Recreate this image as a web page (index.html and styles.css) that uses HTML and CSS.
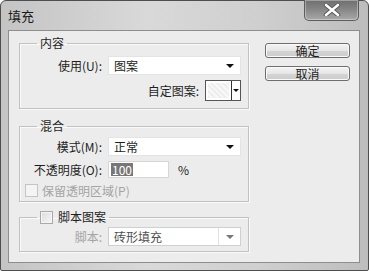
FILE: index.html
```html
<!DOCTYPE html>
<html lang="zh-CN">
<head>
    <title>填充</title>
    <meta charset="UTF-8" />
    <link rel="stylesheet" href="styles.css">
</head>
<body>
    <div class="window">
        <div class="titlebar">
            <span class="title">填充</span>
            <div class="close">
                <svg width="20" height="12" viewBox="0 0 20 12">
                    <path d="M4 1 L16 11 M16 1 L4 11" stroke="#5a5a5a" stroke-width="4.5" stroke-linecap="round"/>
                    <path d="M4 1 L16 11 M16 1 L4 11" stroke="#ffffff" stroke-width="2.5" stroke-linecap="round"/>
                </svg>
            </div>
        </div>

        <div class="client">
            <div class="groups">
                <fieldset class="group group-content">
                    <legend>内容</legend>
                    <div class="form-row">
                        <label class="label">使用(U):</label>
                        <div class="select"><span class="value">图案</span><span class="arrow"></span></div>
                    </div>
                    <div class="pattern-row">
                        <span>自定图案:</span>
                        <div class="swatch">
                            <div class="swatch-preview"></div>
                            <div class="swatch-drop"><span class="arrow small"></span></div>
                        </div>
                    </div>
                </fieldset>

                <fieldset class="group group-blend">
                    <legend>混合</legend>
                    <div class="form-row">
                        <label class="label">模式(M):</label>
                        <div class="select"><span class="value">正常</span><span class="arrow"></span></div>
                    </div>
                    <div class="form-row">
                        <label class="label">不透明度(O):</label>
                        <div class="opacity">
                            <div class="textbox"><span class="selected">100</span></div>
                            <span class="unit">%</span>
                        </div>
                    </div>
                    <div class="check-row disabled">
                        <span class="checkbox"></span>
                        <span>保留透明区域(P)</span>
                    </div>
                </fieldset>

                <fieldset class="group group-script">
                    <legend><span class="checkbox"></span><span>脚本图案</span></legend>
                    <div class="form-row">
                        <label class="label disabled">脚本:</label>
                        <div class="select select-disabled">
                            <span class="value">砖形填充</span>
                            <span class="drop"><span class="arrow grey"></span></span>
                        </div>
                    </div>
                </fieldset>
            </div>

            <div class="buttons">
                <button class="btn">确定</button>
                <button class="btn">取消</button>
            </div>
        </div>
    </div>
</body>
</html>
```

FILE: styles.css
```css
* {
    box-sizing: border-box;
}

body {
    margin: 0;
    background: #ffffff;
    font-family: "Noto Sans CJK SC", "Liberation Sans", sans-serif;
    font-size: 12px;
    color: #1e1e1e;
}

.window {
    width: 369px;
    height: 271px;
    border: 1px solid #4e4e4e;
    border-radius: 6px 6px 2px 2px;
    background: linear-gradient(to right, #c4c4c4, #d9d9d9 40%, #cfcfcf 70%, #bdbdbd);
    padding: 0 8px 7px 7px;
    display: flex;
    flex-direction: column;
}

.titlebar {
    height: 29px;
    display: flex;
    align-items: flex-start;
}

.title {
    font-size: 13px;
    line-height: 14px;
    margin-top: 8px;
    color: #1a1a1a;
}

.close {
    margin-left: auto;
    margin-right: 1px;
    margin-top: -1px;
    width: 55px;
    height: 21px;
    border: 1px solid #5c5c5c;
    border-top: none;
    border-radius: 0 0 5px 5px;
    background: linear-gradient(to bottom, #6e6e6e, #858585 45%, #a9a9a9);
    box-shadow: inset 0 0 0 1px rgba(255, 255, 255, 0.35);
    display: flex;
    align-items: center;
    justify-content: center;
}

.client {
    flex: 1;
    border: 1px solid #8e8e8e;
    background: #ececec;
    display: flex;
    padding: 5px 0 0 10px;
}

.groups {
    width: 230px;
}

.group {
    margin: 0;
    padding: 0 7px 0 0;
    border: 1px solid #c2c2c2;
    box-shadow: 1px 1px 0 #fafafa, inset 1px 1px 0 #fafafa;
    min-width: 0;
}

.group legend {
    margin-left: 17px;
    padding: 0 3px;
    line-height: 14px;
    height: 14px;
    display: flex;
    align-items: center;
    gap: 5px;
}

.group-content {
    padding-top: 6px;
    padding-bottom: 7px;
}

.group-blend {
    margin-top: 10px;
    padding-top: 4px;
    padding-bottom: 3px;
}

.group-script {
    margin-top: 8px;
    padding-top: 3px;
    padding-bottom: 5px;
}

.form-row {
    display: grid;
    grid-template-columns: 82px 133px;
    column-gap: 6px;
    align-items: center;
}

.group-blend .form-row + .form-row {
    margin-top: 5px;
}

.label {
    text-align: right;
    line-height: 14px;
}

.disabled {
    color: #a4a4a4;
}

.select {
    height: 19px;
    background: #ffffff;
    border: 1px solid #e4e4e4;
    display: flex;
    align-items: center;
    padding-left: 5px;
}

.select .value {
    flex: 1;
}

.arrow {
    width: 0;
    height: 0;
    border-left: 4px solid transparent;
    border-right: 4px solid transparent;
    border-top: 4px solid #111111;
    margin-right: 6px;
}

.arrow.small {
    border-left-width: 3px;
    border-right-width: 3px;
    border-top-width: 3px;
    margin: 0;
}

.arrow.grey {
    border-top-color: #777777;
    margin: 0;
}

.pattern-row {
    margin-top: 5px;
    display: flex;
    justify-content: flex-end;
    align-items: center;
    gap: 6px;
}

.swatch {
    width: 36px;
    height: 21px;
    border: 1px solid #555555;
    display: flex;
    background: #ffffff;
}

.swatch-preview {
    flex: 1;
    margin: 2px;
    background:
        repeating-linear-gradient(45deg, #eeeeee 0 2px, #f8f8f8 2px 4px);
}

.swatch-drop {
    width: 9px;
    border-left: 1px solid #333333;
    display: flex;
    align-items: center;
    justify-content: center;
}

.opacity {
    display: flex;
    align-items: center;
}

.textbox {
    width: 61px;
    height: 17px;
    background: #ffffff;
    border: 1px solid #d6d6d6;
    display: flex;
    align-items: center;
    padding-left: 2px;
}

.selected {
    background: #777777;
    color: #ffffff;
    line-height: 13px;
    padding: 0 1px;
}

.unit {
    margin-left: 9px;
}

.check-row {
    margin-top: 5px;
    margin-left: 5px;
    height: 15px;
    display: flex;
    align-items: center;
    gap: 4px;
}

.checkbox {
    width: 13px;
    height: 13px;
    border: 1px solid #a9a9a9;
    background: linear-gradient(135deg, #dcdcdc, #f6f6f6);
    box-shadow: inset 0 0 0 1px #f4f4f4;
}

.check-row .checkbox {
    border-color: #c4c4c4;
    background: #f4f4f4;
}

.select-disabled {
    border-color: #d0d0d0;
    color: #505050;
    padding-right: 0;
}

.drop {
    width: 22px;
    height: 100%;
    border-left: 1px solid #e2e2e2;
    display: flex;
    align-items: center;
    justify-content: center;
}

.buttons {
    margin-left: 16px;
    margin-top: 7px;
    display: flex;
    flex-direction: column;
    gap: 8px;
}

.btn {
    width: 85px;
    height: 15px;
    padding: 0;
    font-family: inherit;
    font-size: 12px;
    line-height: 12px;
    color: #1e1e1e;
    border: 1px solid #6e6e6e;
    border-radius: 3px;
    background: linear-gradient(to bottom, #f4f4f4, #e6e6e6 50%, #d4d4d4 51%, #cdcdcd);
    box-shadow: inset 0 0 0 1px #fafafa;
}
```
